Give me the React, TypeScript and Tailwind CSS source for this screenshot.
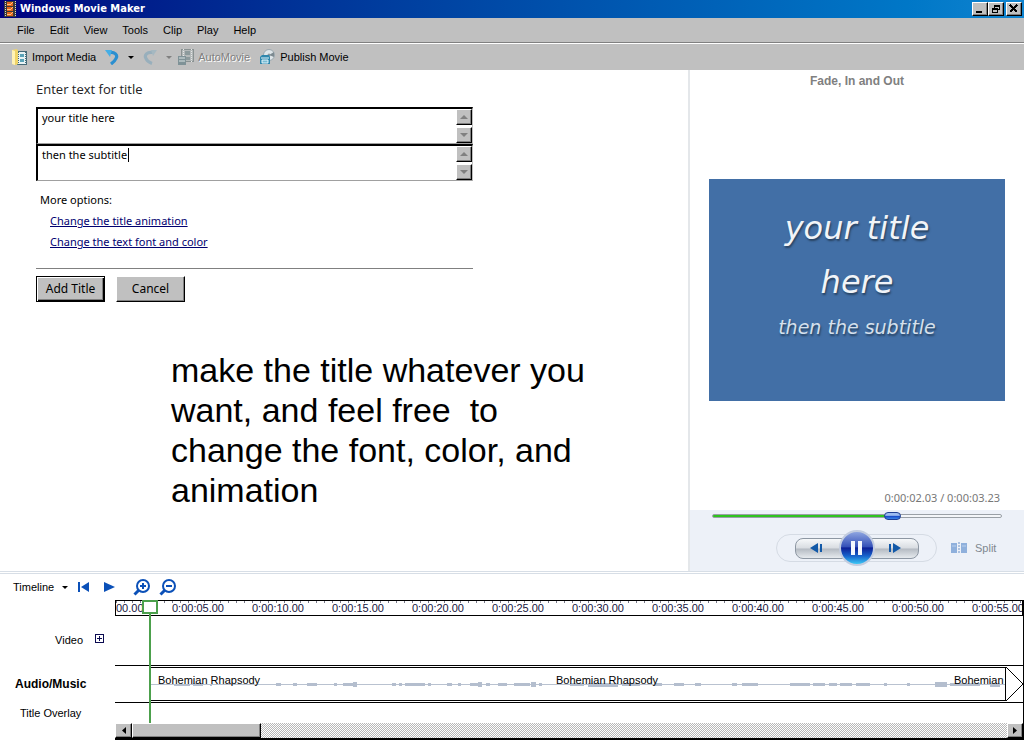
// src/App.tsx
import React from 'react';

type WaveSegment = { x: number; w: number; h: number };

const MENUS = ['File', 'Edit', 'View', 'Tools', 'Clip', 'Play', 'Help'];

const TICKS = [
  '0:00:05.00', '0:00:10.00', '0:00:15.00', '0:00:20.00', '0:00:25.00', '0:00:30.00',
  '0:00:35.00', '0:00:40.00', '0:00:45.00', '0:00:50.00', '0:00:55.00',
];

const WAVE: WaveSegment[] = [
  { x: 24, w: 16, h: 2 }, { x: 43, w: 10, h: 3 }, { x: 60, w: 2, h: 2 }, { x: 126, w: 5, h: 3 },
  { x: 143, w: 4, h: 3 }, { x: 157, w: 10, h: 3 }, { x: 184, w: 3, h: 3 }, { x: 193, w: 14, h: 3 },
  { x: 203, w: 4, h: 5 }, { x: 242, w: 4, h: 3 }, { x: 249, w: 3, h: 3 }, { x: 255, w: 20, h: 3 },
  { x: 278, w: 3, h: 3 }, { x: 297, w: 5, h: 3 }, { x: 308, w: 3, h: 3 }, { x: 320, w: 8, h: 3 },
  { x: 328, w: 4, h: 5 }, { x: 336, w: 4, h: 3 }, { x: 348, w: 9, h: 3 }, { x: 364, w: 16, h: 3 },
  { x: 381, w: 5, h: 5 }, { x: 389, w: 3, h: 3 }, { x: 420, w: 14, h: 3 }, { x: 438, w: 30, h: 4 },
  { x: 472, w: 18, h: 3 }, { x: 504, w: 8, h: 3 }, { x: 524, w: 10, h: 3 }, { x: 545, w: 6, h: 3 },
  { x: 582, w: 5, h: 3 }, { x: 592, w: 16, h: 3 }, { x: 640, w: 20, h: 3 }, { x: 663, w: 12, h: 3 },
  { x: 679, w: 8, h: 3 }, { x: 690, w: 12, h: 3 }, { x: 706, w: 14, h: 3 }, { x: 734, w: 3, h: 3 },
  { x: 757, w: 3, h: 3 }, { x: 785, w: 12, h: 5 }, { x: 800, w: 30, h: 3 }, { x: 840, w: 10, h: 4 },
];

const BEVEL =
  'bg-[#c0c0c0] border border-t-white border-l-white border-r-black border-b-black shadow-[inset_-1px_-1px_0_#808080]';

const WindowButton: React.FC<{ label: string; children: React.ReactNode }> = ({ label, children }) => (
  <button aria-label={label} className={`flex h-3.5 w-4 items-center justify-center ${BEVEL}`}>
    <svg width="10" height="10" viewBox="0 0 10 10" shapeRendering="crispEdges">{children}</svg>
  </button>
);

const TitleBar = () => (
  <header className="flex h-[18px] items-center bg-linear-to-r from-[#000080] to-[#1084d0] pl-1 pr-0.5">
    <svg width="12" height="16" viewBox="0 0 12 16" shapeRendering="crispEdges">
      <rect width="12" height="16" fill="#3a3a3a" />
      <path d="M1 0v16M11 0v16" stroke="#d8dccb" strokeWidth="1" strokeDasharray="1 1" />
      <path d="M3 1h6v4H3zM3 6h6v4H3zM3 11h6v4H3z" fill="#e2641c" />
      <path d="M3 3l3 1 3-3M3 8l3 1 3-3M3 13l3 1 3-3" stroke="#ffc27a" fill="none" />
    </svg>
    <h1 className="ml-1 flex-1 text-[11px] leading-4 font-bold text-white font-['DejaVu_Sans_Condensed','DejaVu_Sans',sans-serif]">
      Windows Movie Maker
    </h1>
    <WindowButton label="Minimize">
      <path d="M1 7h6v2H1z" fill="#000" />
    </WindowButton>
    <WindowButton label="Restore">
      <path d="M3 1h6v2H3zM3 3h1v1H3zM8 3h1v3H8zM7 5h1v1H7zM1 4h6v2H1zM1 6h1v3H1zM6 6h1v3H6zM2 8h4v1H2z" fill="#000" />
    </WindowButton>
    <span className="w-0.5" />
    <WindowButton label="Close">
      <path d="M1 1l7 7M8 1L1 8" stroke="#000" strokeWidth="1.500" />
    </WindowButton>
  </header>
);

const Caret: React.FC<{ className?: string }> = ({ className = '' }) => (
  <svg className={className} width="6" height="3" viewBox="0 0 6 3">
    <path d="M0 0h6L3 3z" fill="currentColor" />
  </svg>
);

const Toolbar = () => (
  <div className="flex h-[26px] items-center bg-[#c0c0c0] pl-3">
    <button className="flex items-center gap-1">
      <svg width="16" height="16" viewBox="0 0 16 16">
        <rect x="5.500" y="2.500" width="9" height="13" fill="#e9f3f5" stroke="#456977" />
        <path d="M6.500 3v12M13.500 3v12" stroke="#456977" strokeDasharray="1 1" />
        <path d="M8 5h4v3H8zM8 10h4v3H8z" fill="#5aa3b8" />
        <path d="M0 1l5-1 1 2v13l-2 1-4-1z" fill="#f0d468" />
        <path d="M0 1l3 1v14l-3-1z" fill="#fff2b5" />
      </svg>
      Import Media
    </button>
    <button aria-label="Undo" className="ml-2">
      <svg width="16" height="16" viewBox="0 0 16 16">
        <path d="M5 3.500C11 2.500 14 6 12 9.500 11 12 9 13.500 7 15" fill="none" stroke="#2b8fd0" strokeWidth="3.200" />
        <path d="M1 1l7 0-2 7z" fill="#45aee5" />
      </svg>
    </button>
    <button aria-label="Undo history" className="ml-2 text-black"><Caret /></button>
    <button aria-label="Redo" className="ml-2 opacity-70">
      <svg width="16" height="16" viewBox="0 0 16 16">
        <path d="M11 3.500C5 2.500 2 6 4 9.500 5 12 7 13.500 10 14.500" fill="none" stroke="#88a9bb" strokeWidth="3.200" />
        <path d="M15 1L9 1l2 6z" fill="#9bb5c2" />
      </svg>
    </button>
    <button aria-label="Redo history" className="ml-2 text-[#808080]"><Caret /></button>
    <button disabled className="ml-1.5 flex items-center gap-1 text-[#808080] [text-shadow:1px_1px_0_#fff]">
      <svg width="16" height="16" viewBox="0 0 16 16">
        <rect x="3.500" y="0.500" width="12" height="12" fill="#b4b9b9" stroke="#8a9292" />
        <path d="M5.500 0v13M13.500 0v13" stroke="#e5e8e8" strokeDasharray="1 1" />
        <path d="M7 2h5v4H7zM7 8h5v3H7z" fill="#8c9a9c" />
        <path d="M0 7h8v9H0z" fill="#7f9297" />
        <path d="M1 9h6M1 12h6" stroke="#dbe3e3" />
      </svg>
      AutoMovie
    </button>
    <button className="ml-2.5 flex items-center gap-1">
      <svg width="16" height="16" viewBox="0 0 16 16">
        <circle cx="9" cy="6" r="5.500" fill="#dfe6ea" stroke="#9aa7ae" />
        <path d="M9 6l5-3v5z" fill="#7d8a91" />
        <circle cx="9" cy="6" r="1.500" fill="#8c979c" />
        <path d="M0 8l2-2h7l1 2v7H0z" fill="#2f87ad" />
        <path d="M1 9h8M2 11h6v3H2z" stroke="#e4f5fb" fill="#79bbd3" />
      </svg>
      Publish Movie
    </button>
  </div>
);

const ScrollButton: React.FC<{ label: string; down?: boolean }> = ({ label, down }) => (
  <button aria-label={label} className={`flex h-4 w-4 items-center justify-center text-[#808080] ${BEVEL}`}>
    <svg width="8" height="4" viewBox="0 0 8 4">
      <path d={down ? 'M0 0h8L4 4z' : 'M0 4h8L4 0z'} fill="currentColor" />
    </svg>
  </button>
);

const TitleField: React.FC<{ id: string; label: string; value: string; focused?: boolean }> = ({
  id, label, value, focused,
}) => (
  <div className="relative flex h-[37px] border-t-2 border-l-2 border-r border-b border-t-black border-l-black border-r-[#c0c0c0] border-b-[#a0a0a0] bg-white">
    <textarea
      id={id}
      rows={1}
      aria-label={label}
      defaultValue={value}
      className="min-w-0 flex-1 resize-none overflow-hidden px-1 pt-px text-[11px] leading-4 text-black outline-none"
    />
    {focused && <span className="absolute left-[90px] top-0.5 h-3.5 w-px bg-black" />}
    <div className="flex flex-col justify-between">
      <ScrollButton label={`Scroll ${label} up`} />
      <ScrollButton label={`Scroll ${label} down`} down />
    </div>
  </div>
);

const TitleEditor = () => (
  <section className="flex-1 pt-2.5 pl-9 font-['Noto_Sans','Open_Sans',sans-serif] text-[11px] text-black">
    <div className="max-w-[437px]">
      <label htmlFor="title" className="block font-['Open_Sans','Noto_Sans',sans-serif] text-[13px] leading-[18px] text-[#222]">
        Enter text for title
      </label>
      <div className="mt-[9px]">
        <TitleField id="title" label="title" value="your title here" />
        <TitleField id="subtitle" label="subtitle" value="then the subtitle" focused />
      </div>
      <p className="mt-2.5 ml-1 leading-[18px]">More options:</p>
      <ul className="mt-[3px] ml-3.5 leading-[18px] text-[#000070] underline">
        <li className="h-[21px]"><a href="#animation">Change the title animation</a></li>
        <li className="h-[21px]"><a href="#font">Change the text font and color</a></li>
      </ul>
      <hr className="mt-3.5 border-[#808080]" />
      <div className="mt-[7px] flex gap-[11px] text-[12px]">
        <button className="h-[26px] w-[69px] border border-black bg-[#c0c0c0] shadow-[inset_1px_1px_0_#fff,inset_-1px_-1px_0_#000,inset_-2px_-2px_0_#808080]">
          Add Title
        </button>
        <button className={`h-[26px] w-[69px] ${BEVEL}`}>Cancel</button>
      </div>
    </div>
    <p className="mt-12 ml-[135px] max-w-[430px] whitespace-pre-wrap font-['Liberation_Sans',Arial,sans-serif] text-[34px] leading-10">
      make the title whatever you want, and feel free  to change the font, color, and animation
    </p>
  </section>
);

const StepButton: React.FC<{ label: string; forward?: boolean }> = ({ label, forward }) => (
  <button
    aria-label={label}
    className={`flex h-[21px] w-[50px] shrink-0 items-center border border-[#8d97a3] bg-[linear-gradient(#f6f8fa_0%,#d8dce1_48%,#b4bac2_52%,#e6eaee_100%)] ${
      forward ? 'justify-end rounded-r-lg pr-4' : 'rounded-l-lg pl-[13px]'
    }`}
  >
    <svg width="14" height="10" viewBox="0 0 14 10">
      <path d={forward ? 'M1 1h2v8H1zM5 0v10l8-5z' : 'M11 1h2v8h-2zM9 0v10L1 5z'} fill="#1259a8" />
    </svg>
  </button>
);

const Monitor = () => (
  <aside className="flex w-[336px] shrink-0 flex-col border-l-2 border-[#e4e7ea]">
    <h2 className="pt-0.5 text-center font-['Liberation_Sans',Arial,sans-serif] text-[12px] leading-[18px] font-bold text-[#808080]">
      Fade, In and Out
    </h2>
    <div className="flex flex-1 items-center justify-center">
      <div className="h-[222px] w-[296px] bg-[#426fa6] pt-[22px] text-center font-['DejaVu_Sans',cursive] text-[#f1f4f8] italic [text-shadow:1px_2px_2px_#27415f]">
        <p className="mx-auto w-[200px] text-[32px] leading-[54px]">your title here</p>
        <p className="text-[19px] leading-9 text-[#d5e0ec]">then the subtitle</p>
      </div>
    </div>
    <p className="pr-6 text-right font-['Noto_Sans','Open_Sans',sans-serif] text-[11px] leading-4 text-[#777]">
      0:00:02.03 / 0:00:03.23
    </p>
    <div className="mt-1 h-[61px] bg-[#edf1f8] px-[22px] pt-1">
      <input
        type="range"
        aria-label="Seek"
        defaultValue={63}
        className="block h-1 w-full appearance-none rounded-full border border-[#9aa0a6] bg-[linear-gradient(90deg,#2fc31f_62%,#f4f6f9_62%)] [&::-webkit-slider-thumb]:h-2 [&::-webkit-slider-thumb]:w-[17px] [&::-webkit-slider-thumb]:appearance-none [&::-webkit-slider-thumb]:rounded-[4px] [&::-webkit-slider-thumb]:border [&::-webkit-slider-thumb]:border-[#1f3f94] [&::-webkit-slider-thumb]:bg-[linear-gradient(#9dbcf0_40%,#1244c4_50%,#3d86ea)]"
      />
      <div className="mt-4 flex items-center pl-16">
        <div className="flex h-7 w-[161px] items-center justify-center rounded-full border border-[#d5dbe4]">
          <StepButton label="Previous frame" />
          <button
            aria-label="Pause"
            className="z-10 -mx-1.5 flex h-9 w-9 shrink-0 items-center justify-center rounded-full border-2 border-[#c3cde0] bg-[linear-gradient(#8ea5e0_0%,#3450b8_46%,#0d1f96_50%,#1763cc_75%,#3cc8f5_100%)]"
          >
            <svg width="11" height="14" viewBox="0 0 11 14">
              <path d="M0 0h4v14H0zM7 0h4v14H7z" fill="#f4f7fd" />
            </svg>
          </button>
          <StepButton label="Next frame" forward />
        </div>
        <button className="ml-3.5 flex items-center gap-2 text-[#808890]">
          <svg width="16" height="12" viewBox="0 0 16 12">
            <path d="M0 1h6v10H0zM10 1h6v10h-6z" fill="#8fb0dc" />
            <path d="M1 4h4M11 4h4" stroke="#b9d0ee" />
            <path d="M8 0v12" stroke="#6d93c8" strokeDasharray="2 1" />
          </svg>
          Split
        </button>
      </div>
    </div>
  </aside>
);

const ZoomIcon: React.FC<{ plus?: boolean }> = ({ plus }) => (
  <svg width="18" height="18" viewBox="0 0 18 18" fill="none" stroke="#0b50b8" strokeWidth="2">
    <circle cx="10" cy="8" r="6" />
    <path d="M5.500 12.500L1.500 16.500" strokeWidth="3" />
    <path d={plus ? 'M7 8h6M10 5v6' : 'M7 8h6'} />
  </svg>
);

const TimelineToolbar = () => (
  <div className="flex h-[26px] items-center pl-[13px]">
    <button className="flex items-center gap-2">
      Timeline
      <Caret />
    </button>
    <button aria-label="Rewind timeline" className="ml-2.5">
      <svg width="11" height="10" viewBox="0 0 11 10"><path d="M0 0h2v10H0zM11 0v10L3 5z" fill="#0b50b8" /></svg>
    </button>
    <button aria-label="Play timeline" className="ml-[15px]">
      <svg width="12" height="10" viewBox="0 0 12 10"><path d="M0 0l11 5-11 5z" fill="#0b50b8" /></svg>
    </button>
    <button aria-label="Zoom in" className="ml-[17px]"><ZoomIcon plus /></button>
    <button aria-label="Zoom out" className="ml-2"><ZoomIcon /></button>
  </div>
);

const Ruler = () => (
  <div className="relative flex h-4 overflow-hidden border border-black text-[#151540]">
    <div className="absolute inset-x-0 top-0 h-0.5 bg-[repeating-linear-gradient(90deg,#778_0_1px,transparent_1px_8px)]" />
    <span className="w-14 shrink-0 leading-[14px]">00.00</span>
    {TICKS.map((t) => (
      <span key={t} className="w-20 shrink-0 leading-[14px] last:w-auto">{t}</span>
    ))}
  </div>
);

const AudioLane = () => (
  <div className="flex h-[38px] border-y border-black">
    <div className="ml-[35px] min-w-0 flex-1 py-px">
      <div className="relative h-full overflow-hidden border-y border-r border-black">
        <svg className="absolute inset-0 h-full w-full" viewBox="0 0 855 32" preserveAspectRatio="none" shapeRendering="crispEdges">
          <path d="M0 16.500h855" stroke="#b9c2d0" />
          {WAVE.map((s) => (
            <rect key={s.x} x={s.x} y={17 - Math.ceil(s.h / 2)} width={s.w} height={s.h} fill="#b4bece" />
          ))}
        </svg>
        <div className="relative flex pt-1 pl-2 leading-4">
          <span className="w-[398px] shrink-0">Bohemian Rhapsody</span>
          <span className="w-[398px] shrink-0">Bohemian Rhapsody</span>
          <span>Bohemian</span>
        </div>
      </div>
    </div>
    <svg width="17" height="36" viewBox="0 0 17 36" fill="none" stroke="#000" shapeRendering="crispEdges">
      <path d="M0 1l17 17L0 35" />
    </svg>
  </div>
);

const ScrollBar = () => (
  <div className="flex h-[17px] border-b-2 border-black bg-[repeating-conic-gradient(#b8b8b8_0_25%,#fff_0_50%)] bg-size-[2px_2px]">
    <button aria-label="Scroll left" className={`flex w-[17px] items-center justify-center ${BEVEL}`}>
      <svg width="4" height="7" viewBox="0 0 4 7"><path d="M4 0v7L0 3.500z" /></svg>
    </button>
    <div className={`w-[129px] ${BEVEL}`} />
    <button aria-label="Scroll right" className={`ml-auto flex w-4 items-center justify-center ${BEVEL}`}>
      <svg width="4" height="7" viewBox="0 0 4 7"><path d="M0 0v7l4-3.500z" /></svg>
    </button>
  </div>
);

const Timeline = () => (
  <section className="border-t border-[#d7dee6] pt-px">
    <div className="border-t border-[#d7dee6]">
      <TimelineToolbar />
      <div className="flex">
        <div className="w-[115px] shrink-0 pt-4">
          <div className="flex h-[49px] items-center justify-end gap-3 pr-[11px]">
            Video
            <button aria-label="Expand video track" className="mb-1">
              <svg width="9" height="9" viewBox="0 0 9 9" fill="none" stroke="#0a0a50" shapeRendering="crispEdges">
                <path d="M0.500 0.500h8v8h-8zM2 4.500h5M4.500 2v5" />
              </svg>
            </button>
          </div>
          <div className="flex h-[38px] items-center pl-[15px] text-[12px] font-bold">Audio/Music</div>
          <div className="flex h-[21px] items-center pl-5">Title Overlay</div>
        </div>
        <div className="relative min-w-0 flex-1 border-r border-black">
          <Ruler />
          <div className="h-[49px]" />
          <AudioLane />
          <div className="h-5" />
          <ScrollBar />
          <div className="absolute top-0 left-[27px] flex h-[123px] w-4 flex-col items-center">
            <span className="h-3.5 w-4 shrink-0 border-2 border-[#4ca04c] bg-white" />
            <span className="w-0.5 flex-1 bg-[#4ca04c]" />
          </div>
        </div>
      </div>
    </div>
  </section>
);

const App: React.FC = () => {
  return (
    <div className="min-h-screen bg-white pr-[5px]">
      <div className="flex min-h-screen flex-col font-['Liberation_Sans',Arial,sans-serif] text-[11px] text-black">
        <TitleBar />
        <nav className="flex h-[25px] items-center gap-[15px] border-b border-[#808080] bg-[#c0c0c0] pl-[17px]">
          {MENUS.map((m) => (
            <button key={m}>{m}</button>
          ))}
        </nav>
        <div className="border-t border-white">
          <Toolbar />
        </div>
        <main className="flex flex-1">
          <TitleEditor />
          <Monitor />
        </main>
        <Timeline />
      </div>
    </div>
  );
};

export default App;
